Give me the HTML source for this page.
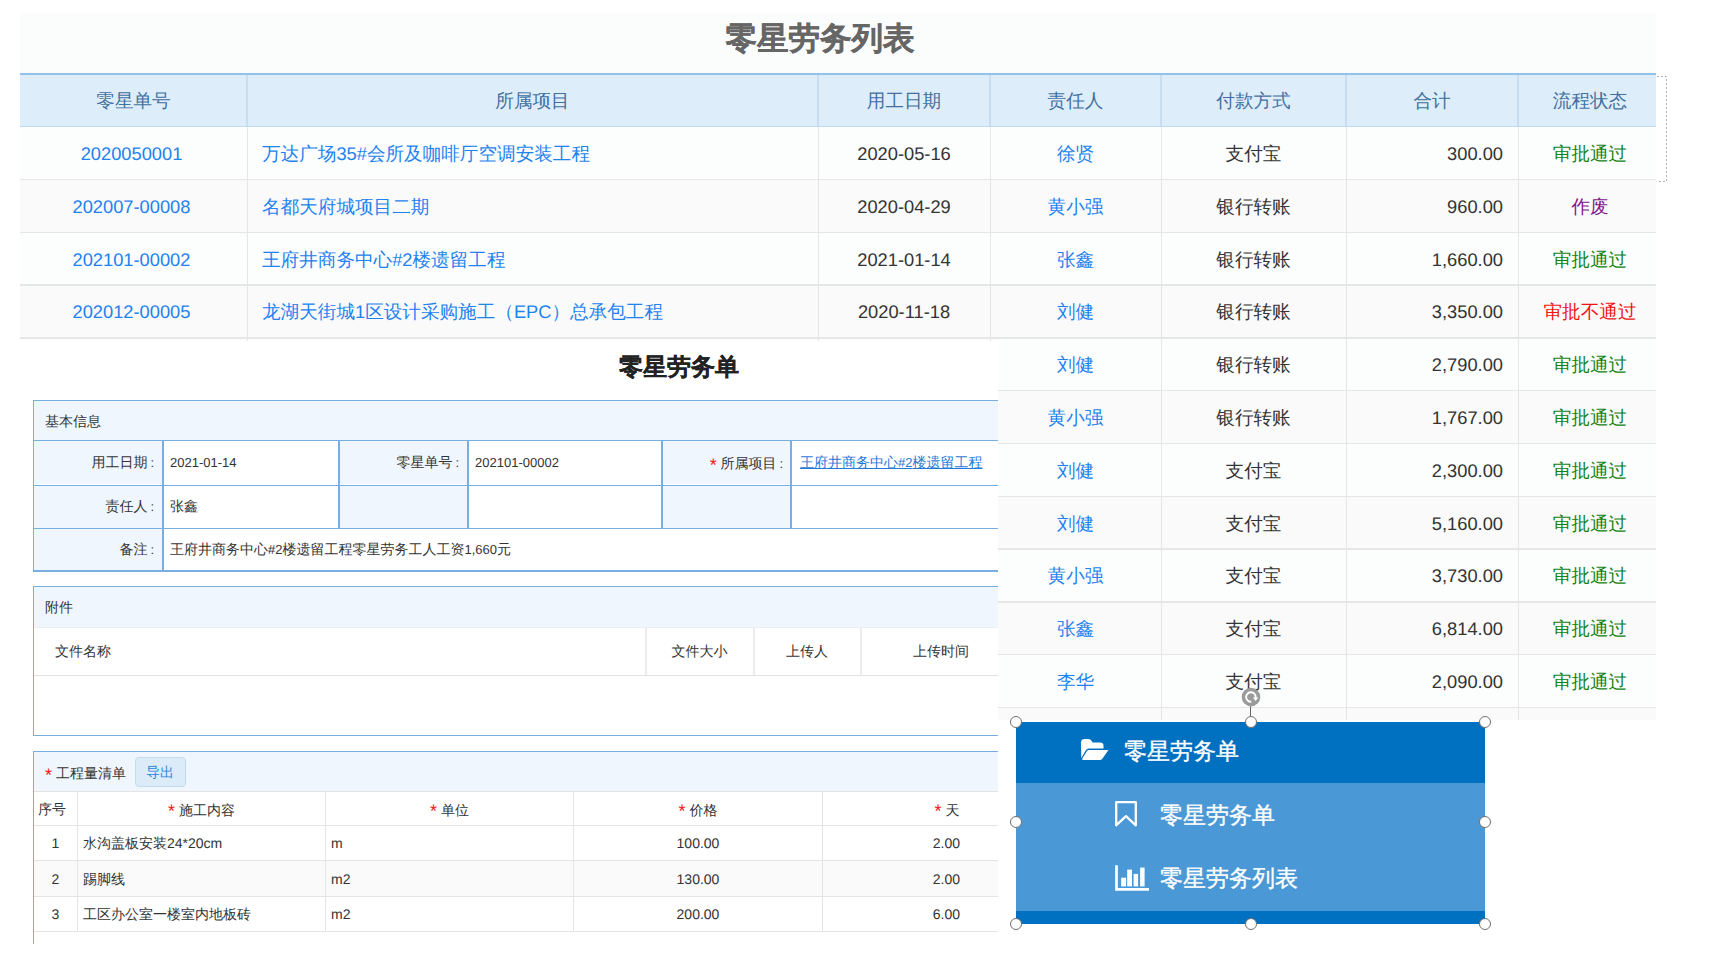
<!DOCTYPE html>
<html><head><meta charset="utf-8"><style>
*{box-sizing:border-box;margin:0;padding:0}
html,body{width:1714px;height:972px;overflow:hidden;background:#fff}
body{position:relative;font-family:"Liberation Sans",sans-serif;color:#333;text-rendering:geometricPrecision}
.abs{position:absolute}
.t{position:absolute;white-space:nowrap}
</style></head><body>

<div class="abs" style="left:20px;top:14px;width:1636px;height:706px;background:#fbfcfc"></div>
<div class="t" style="left:20px;top:13px;width:1600px;height:56px;line-height:50px;text-align:center;font-size:31.5px;font-weight:bold;color:#666;-webkit-text-stroke:0.3px #666">零星劳务列表</div>
<div class="abs" style="left:20px;top:73px;width:1636px;height:54px;background:#deedfa;border-top:2px solid #92c2ea;border-bottom:1px solid #b9d5ee"></div>
<div class="t" style="left:20px;top:75px;width:227px;height:51px;line-height:51px;text-align:center;font-size:18px;color:#41709f"><span style="font-size:18.6px">零星单号</span></div>
<div class="t" style="left:247px;top:75px;width:571px;height:51px;line-height:51px;text-align:center;font-size:18px;color:#41709f"><span style="font-size:18.6px">所属项目</span></div>
<div class="t" style="left:818px;top:75px;width:172px;height:51px;line-height:51px;text-align:center;font-size:18px;color:#41709f"><span style="font-size:18.6px">用工日期</span></div>
<div class="t" style="left:990px;top:75px;width:171px;height:51px;line-height:51px;text-align:center;font-size:18px;color:#41709f"><span style="font-size:18.6px">责任人</span></div>
<div class="t" style="left:1161px;top:75px;width:185px;height:51px;line-height:51px;text-align:center;font-size:18px;color:#41709f"><span style="font-size:18.6px">付款方式</span></div>
<div class="t" style="left:1346px;top:75px;width:172px;height:51px;line-height:51px;text-align:center;font-size:18px;color:#41709f"><span style="font-size:18.6px">合计</span></div>
<div class="t" style="left:1521px;top:75px;width:138px;height:51px;line-height:51px;text-align:center;font-size:18px;color:#41709f"><span style="font-size:18.6px">流程状态</span></div>
<div class="abs" style="left:246px;top:75px;width:2px;height:51px;background:#c8ddef"></div>
<div class="abs" style="left:817px;top:75px;width:2px;height:51px;background:#c8ddef"></div>
<div class="abs" style="left:989px;top:75px;width:2px;height:51px;background:#c8ddef"></div>
<div class="abs" style="left:1160px;top:75px;width:2px;height:51px;background:#c8ddef"></div>
<div class="abs" style="left:1345px;top:75px;width:2px;height:51px;background:#c8ddef"></div>
<div class="abs" style="left:1517px;top:75px;width:2px;height:51px;background:#c8ddef"></div>
<div class="abs" style="left:20px;top:126.4px;width:1636px;height:52.8px;background:#fcfdfd"></div>
<div class="abs" style="left:20px;top:179.2px;width:1636px;height:52.8px;background:#fafafa"></div>
<div class="abs" style="left:20px;top:232.0px;width:1636px;height:52.8px;background:#fcfdfd"></div>
<div class="abs" style="left:20px;top:284.8px;width:1636px;height:52.8px;background:#fafafa"></div>
<div class="abs" style="left:20px;top:337.6px;width:1636px;height:52.8px;background:#fcfdfd"></div>
<div class="abs" style="left:20px;top:390.4px;width:1636px;height:52.8px;background:#fafafa"></div>
<div class="abs" style="left:20px;top:443.2px;width:1636px;height:52.8px;background:#fcfdfd"></div>
<div class="abs" style="left:20px;top:496.0px;width:1636px;height:52.8px;background:#fafafa"></div>
<div class="abs" style="left:20px;top:548.8px;width:1636px;height:52.8px;background:#fcfdfd"></div>
<div class="abs" style="left:20px;top:601.6px;width:1636px;height:52.8px;background:#fafafa"></div>
<div class="abs" style="left:20px;top:654.4px;width:1636px;height:52.8px;background:#fcfdfd"></div>
<div class="abs" style="left:20px;top:707.2px;width:1636px;height:52.8px;background:#fafafa"></div>
<div class="abs" style="left:20px;top:178.7px;width:1636px;height:1.5px;background:#e6e6e6"></div>
<div class="abs" style="left:20px;top:231.5px;width:1636px;height:1.5px;background:#e6e6e6"></div>
<div class="abs" style="left:20px;top:284.3px;width:1636px;height:1.5px;background:#e6e6e6"></div>
<div class="abs" style="left:20px;top:337.1px;width:1636px;height:1.5px;background:#e6e6e6"></div>
<div class="abs" style="left:20px;top:389.9px;width:1636px;height:1.5px;background:#e6e6e6"></div>
<div class="abs" style="left:20px;top:442.7px;width:1636px;height:1.5px;background:#e6e6e6"></div>
<div class="abs" style="left:20px;top:495.5px;width:1636px;height:1.5px;background:#e6e6e6"></div>
<div class="abs" style="left:20px;top:548.3px;width:1636px;height:1.5px;background:#e6e6e6"></div>
<div class="abs" style="left:20px;top:601.1px;width:1636px;height:1.5px;background:#e6e6e6"></div>
<div class="abs" style="left:20px;top:653.9px;width:1636px;height:1.5px;background:#e6e6e6"></div>
<div class="abs" style="left:20px;top:706.7px;width:1636px;height:1.5px;background:#e6e6e6"></div>
<div class="abs" style="left:20px;top:759.5px;width:1636px;height:1.5px;background:#e6e6e6"></div>
<div class="abs" style="left:246.5px;top:126.4px;width:1.5px;height:593.6px;background:#e6e6e6"></div>
<div class="abs" style="left:817.5px;top:126.4px;width:1.5px;height:593.6px;background:#e6e6e6"></div>
<div class="abs" style="left:989.5px;top:126.4px;width:1.5px;height:593.6px;background:#e6e6e6"></div>
<div class="abs" style="left:1160.5px;top:126.4px;width:1.5px;height:593.6px;background:#e6e6e6"></div>
<div class="abs" style="left:1345.5px;top:126.4px;width:1.5px;height:593.6px;background:#e6e6e6"></div>
<div class="abs" style="left:1517.5px;top:126.4px;width:1.5px;height:593.6px;background:#e6e6e6"></div>
<div class="t" style="left:18px;width:227px;top:127.9px;height:52.8px;line-height:52.8px;font-size:18.3px;text-align:center;color:#1e82f0">2020050001</div>
<div class="t" style="left:262px;top:127.9px;height:52.8px;line-height:52.8px;font-size:18.3px;color:#1e82f0"><span style="font-size:18.6px">万达广场</span>35#<span style="font-size:18.6px">会所及咖啡厅空调安装工程</span></div>
<div class="t" style="left:818px;width:172px;top:127.9px;height:52.8px;line-height:52.8px;font-size:18.3px;text-align:center;color:#333">2020-05-16</div>
<div class="t" style="left:990px;width:171px;top:127.9px;height:52.8px;line-height:52.8px;font-size:18.3px;text-align:center;color:#1e82f0"><span style="font-size:18.6px">徐贤</span></div>
<div class="t" style="left:1161px;width:185px;top:127.9px;height:52.8px;line-height:52.8px;font-size:18.3px;text-align:center;color:#333"><span style="font-size:18.6px">支付宝</span></div>
<div class="t" style="left:1346px;width:157px;top:127.9px;height:52.8px;line-height:52.8px;font-size:18.3px;text-align:right;color:#333">300.00</div>
<div class="t" style="left:1521px;width:138px;top:127.9px;height:52.8px;line-height:52.8px;font-size:18.3px;text-align:center;color:#128212"><span style="font-size:18.6px">审批通过</span></div>
<div class="t" style="left:18px;width:227px;top:180.7px;height:52.8px;line-height:52.8px;font-size:18.3px;text-align:center;color:#1e82f0">202007-00008</div>
<div class="t" style="left:262px;top:180.7px;height:52.8px;line-height:52.8px;font-size:18.3px;color:#1e82f0"><span style="font-size:18.6px">名都天府城项目二期</span></div>
<div class="t" style="left:818px;width:172px;top:180.7px;height:52.8px;line-height:52.8px;font-size:18.3px;text-align:center;color:#333">2020-04-29</div>
<div class="t" style="left:990px;width:171px;top:180.7px;height:52.8px;line-height:52.8px;font-size:18.3px;text-align:center;color:#1e82f0"><span style="font-size:18.6px">黄小强</span></div>
<div class="t" style="left:1161px;width:185px;top:180.7px;height:52.8px;line-height:52.8px;font-size:18.3px;text-align:center;color:#333"><span style="font-size:18.6px">银行转账</span></div>
<div class="t" style="left:1346px;width:157px;top:180.7px;height:52.8px;line-height:52.8px;font-size:18.3px;text-align:right;color:#333">960.00</div>
<div class="t" style="left:1521px;width:138px;top:180.7px;height:52.8px;line-height:52.8px;font-size:18.3px;text-align:center;color:#85158a"><span style="font-size:18.6px">作废</span></div>
<div class="t" style="left:18px;width:227px;top:233.5px;height:52.8px;line-height:52.8px;font-size:18.3px;text-align:center;color:#1e82f0">202101-00002</div>
<div class="t" style="left:262px;top:233.5px;height:52.8px;line-height:52.8px;font-size:18.3px;color:#1e82f0"><span style="font-size:18.6px">王府井商务中心</span>#2<span style="font-size:18.6px">楼遗留工程</span></div>
<div class="t" style="left:818px;width:172px;top:233.5px;height:52.8px;line-height:52.8px;font-size:18.3px;text-align:center;color:#333">2021-01-14</div>
<div class="t" style="left:990px;width:171px;top:233.5px;height:52.8px;line-height:52.8px;font-size:18.3px;text-align:center;color:#1e82f0"><span style="font-size:18.6px">张鑫</span></div>
<div class="t" style="left:1161px;width:185px;top:233.5px;height:52.8px;line-height:52.8px;font-size:18.3px;text-align:center;color:#333"><span style="font-size:18.6px">银行转账</span></div>
<div class="t" style="left:1346px;width:157px;top:233.5px;height:52.8px;line-height:52.8px;font-size:18.3px;text-align:right;color:#333">1,660.00</div>
<div class="t" style="left:1521px;width:138px;top:233.5px;height:52.8px;line-height:52.8px;font-size:18.3px;text-align:center;color:#128212"><span style="font-size:18.6px">审批通过</span></div>
<div class="t" style="left:18px;width:227px;top:286.3px;height:52.8px;line-height:52.8px;font-size:18.3px;text-align:center;color:#1e82f0">202012-00005</div>
<div class="t" style="left:262px;top:286.3px;height:52.8px;line-height:52.8px;font-size:18.3px;color:#1e82f0"><span style="font-size:18.6px">龙湖天街城</span>1<span style="font-size:18.6px">区设计采购施工（</span>EPC<span style="font-size:18.6px">）总承包工程</span></div>
<div class="t" style="left:818px;width:172px;top:286.3px;height:52.8px;line-height:52.8px;font-size:18.3px;text-align:center;color:#333">2020-11-18</div>
<div class="t" style="left:990px;width:171px;top:286.3px;height:52.8px;line-height:52.8px;font-size:18.3px;text-align:center;color:#1e82f0"><span style="font-size:18.6px">刘健</span></div>
<div class="t" style="left:1161px;width:185px;top:286.3px;height:52.8px;line-height:52.8px;font-size:18.3px;text-align:center;color:#333"><span style="font-size:18.6px">银行转账</span></div>
<div class="t" style="left:1346px;width:157px;top:286.3px;height:52.8px;line-height:52.8px;font-size:18.3px;text-align:right;color:#333">3,350.00</div>
<div class="t" style="left:1521px;width:138px;top:286.3px;height:52.8px;line-height:52.8px;font-size:18.3px;text-align:center;color:#f21212"><span style="font-size:18.6px">审批不通过</span></div>
<div class="t" style="left:990px;width:171px;top:339.1px;height:52.8px;line-height:52.8px;font-size:18.3px;text-align:center;color:#1e82f0"><span style="font-size:18.6px">刘健</span></div>
<div class="t" style="left:1161px;width:185px;top:339.1px;height:52.8px;line-height:52.8px;font-size:18.3px;text-align:center;color:#333"><span style="font-size:18.6px">银行转账</span></div>
<div class="t" style="left:1346px;width:157px;top:339.1px;height:52.8px;line-height:52.8px;font-size:18.3px;text-align:right;color:#333">2,790.00</div>
<div class="t" style="left:1521px;width:138px;top:339.1px;height:52.8px;line-height:52.8px;font-size:18.3px;text-align:center;color:#128212"><span style="font-size:18.6px">审批通过</span></div>
<div class="t" style="left:990px;width:171px;top:391.9px;height:52.8px;line-height:52.8px;font-size:18.3px;text-align:center;color:#1e82f0"><span style="font-size:18.6px">黄小强</span></div>
<div class="t" style="left:1161px;width:185px;top:391.9px;height:52.8px;line-height:52.8px;font-size:18.3px;text-align:center;color:#333"><span style="font-size:18.6px">银行转账</span></div>
<div class="t" style="left:1346px;width:157px;top:391.9px;height:52.8px;line-height:52.8px;font-size:18.3px;text-align:right;color:#333">1,767.00</div>
<div class="t" style="left:1521px;width:138px;top:391.9px;height:52.8px;line-height:52.8px;font-size:18.3px;text-align:center;color:#128212"><span style="font-size:18.6px">审批通过</span></div>
<div class="t" style="left:990px;width:171px;top:444.7px;height:52.8px;line-height:52.8px;font-size:18.3px;text-align:center;color:#1e82f0"><span style="font-size:18.6px">刘健</span></div>
<div class="t" style="left:1161px;width:185px;top:444.7px;height:52.8px;line-height:52.8px;font-size:18.3px;text-align:center;color:#333"><span style="font-size:18.6px">支付宝</span></div>
<div class="t" style="left:1346px;width:157px;top:444.7px;height:52.8px;line-height:52.8px;font-size:18.3px;text-align:right;color:#333">2,300.00</div>
<div class="t" style="left:1521px;width:138px;top:444.7px;height:52.8px;line-height:52.8px;font-size:18.3px;text-align:center;color:#128212"><span style="font-size:18.6px">审批通过</span></div>
<div class="t" style="left:990px;width:171px;top:497.5px;height:52.8px;line-height:52.8px;font-size:18.3px;text-align:center;color:#1e82f0"><span style="font-size:18.6px">刘健</span></div>
<div class="t" style="left:1161px;width:185px;top:497.5px;height:52.8px;line-height:52.8px;font-size:18.3px;text-align:center;color:#333"><span style="font-size:18.6px">支付宝</span></div>
<div class="t" style="left:1346px;width:157px;top:497.5px;height:52.8px;line-height:52.8px;font-size:18.3px;text-align:right;color:#333">5,160.00</div>
<div class="t" style="left:1521px;width:138px;top:497.5px;height:52.8px;line-height:52.8px;font-size:18.3px;text-align:center;color:#128212"><span style="font-size:18.6px">审批通过</span></div>
<div class="t" style="left:990px;width:171px;top:550.3px;height:52.8px;line-height:52.8px;font-size:18.3px;text-align:center;color:#1e82f0"><span style="font-size:18.6px">黄小强</span></div>
<div class="t" style="left:1161px;width:185px;top:550.3px;height:52.8px;line-height:52.8px;font-size:18.3px;text-align:center;color:#333"><span style="font-size:18.6px">支付宝</span></div>
<div class="t" style="left:1346px;width:157px;top:550.3px;height:52.8px;line-height:52.8px;font-size:18.3px;text-align:right;color:#333">3,730.00</div>
<div class="t" style="left:1521px;width:138px;top:550.3px;height:52.8px;line-height:52.8px;font-size:18.3px;text-align:center;color:#128212"><span style="font-size:18.6px">审批通过</span></div>
<div class="t" style="left:990px;width:171px;top:603.1px;height:52.8px;line-height:52.8px;font-size:18.3px;text-align:center;color:#1e82f0"><span style="font-size:18.6px">张鑫</span></div>
<div class="t" style="left:1161px;width:185px;top:603.1px;height:52.8px;line-height:52.8px;font-size:18.3px;text-align:center;color:#333"><span style="font-size:18.6px">支付宝</span></div>
<div class="t" style="left:1346px;width:157px;top:603.1px;height:52.8px;line-height:52.8px;font-size:18.3px;text-align:right;color:#333">6,814.00</div>
<div class="t" style="left:1521px;width:138px;top:603.1px;height:52.8px;line-height:52.8px;font-size:18.3px;text-align:center;color:#128212"><span style="font-size:18.6px">审批通过</span></div>
<div class="t" style="left:990px;width:171px;top:655.9px;height:52.8px;line-height:52.8px;font-size:18.3px;text-align:center;color:#1e82f0"><span style="font-size:18.6px">李华</span></div>
<div class="t" style="left:1161px;width:185px;top:655.9px;height:52.8px;line-height:52.8px;font-size:18.3px;text-align:center;color:#333"><span style="font-size:18.6px">支付宝</span></div>
<div class="t" style="left:1346px;width:157px;top:655.9px;height:52.8px;line-height:52.8px;font-size:18.3px;text-align:right;color:#333">2,090.00</div>
<div class="t" style="left:1521px;width:138px;top:655.9px;height:52.8px;line-height:52.8px;font-size:18.3px;text-align:center;color:#128212"><span style="font-size:18.6px">审批通过</span></div>
<div class="abs" style="left:20px;top:125.5px;width:1636px;height:1.5px;background:#c3daee"></div>
<div class="abs" style="left:998px;top:720px;width:716px;height:252px;background:#fff"></div>
<svg class="abs" style="left:1656px;top:75px" width="14" height="110" viewBox="0 0 14 110"><path d="M1 1.5 H10.5 V106.5 H1" fill="none" stroke="#b0b0b0" stroke-width="1" stroke-dasharray="2 2"/></svg>
<div class="abs" style="left:0;top:341px;width:998px;height:631px;background:#fff;overflow:hidden">
<div class="t" style="left:0px;top:10px;width:1358px;height:34px;line-height:34px;text-align:center;font-size:24px;font-weight:bold;color:#222;-webkit-text-stroke:0.2px #222">零星劳务单</div>
<div class="abs" style="left:33px;top:59px;width:1000px;height:171px;border:1px solid #78aee0;background:#fff"></div>
<div class="abs" style="left:34px;top:60px;width:1000px;height:38.5px;background:#eff6fd"></div>
<div class="t" style="left:45px;top:61px;width:200px;height:38px;line-height:38px;font-size:14px;color:#333">基本信息</div>
<div class="abs" style="left:33px;top:98.5px;width:1000px;height:1.5px;background:#78aee0"></div>
<div class="abs" style="left:33px;top:143.5px;width:1000px;height:1.5px;background:#78aee0"></div>
<div class="abs" style="left:33px;top:186.5px;width:1000px;height:1.5px;background:#78aee0"></div>
<div class="abs" style="left:33px;top:229px;width:1000px;height:1.5px;background:#78aee0"></div>
<div class="abs" style="left:34px;top:100px;width:128px;height:43px;background:#eff6fd"></div>
<div class="abs" style="left:34px;top:145px;width:128px;height:41.5px;background:#eff6fd"></div>
<div class="abs" style="left:339px;top:100px;width:128px;height:43px;background:#eff6fd"></div>
<div class="abs" style="left:339px;top:145px;width:128px;height:41.5px;background:#eff6fd"></div>
<div class="abs" style="left:662px;top:100px;width:128px;height:43px;background:#eff6fd"></div>
<div class="abs" style="left:662px;top:145px;width:128px;height:41.5px;background:#eff6fd"></div>
<div class="abs" style="left:34px;top:188px;width:128px;height:41px;background:#eff6fd"></div>
<div class="abs" style="left:162px;top:98.5px;width:1.5px;height:45px;background:#78aee0"></div>
<div class="abs" style="left:162px;top:143.5px;width:1.5px;height:43px;background:#78aee0"></div>
<div class="abs" style="left:338px;top:98.5px;width:1.5px;height:45px;background:#78aee0"></div>
<div class="abs" style="left:338px;top:143.5px;width:1.5px;height:43px;background:#78aee0"></div>
<div class="abs" style="left:467px;top:98.5px;width:1.5px;height:45px;background:#78aee0"></div>
<div class="abs" style="left:467px;top:143.5px;width:1.5px;height:43px;background:#78aee0"></div>
<div class="abs" style="left:661px;top:98.5px;width:1.5px;height:45px;background:#78aee0"></div>
<div class="abs" style="left:661px;top:143.5px;width:1.5px;height:43px;background:#78aee0"></div>
<div class="abs" style="left:790px;top:98.5px;width:1.5px;height:45px;background:#78aee0"></div>
<div class="abs" style="left:790px;top:143.5px;width:1.5px;height:43px;background:#78aee0"></div>
<div class="abs" style="left:162px;top:186.5px;width:1.5px;height:43px;background:#78aee0"></div>
<div class="t" style="left:34px;top:100px;width:120px;height:43px;line-height:43px;text-align:right;font-size:13px;color:#333"><span style="font-size:14px">用工日期</span><span style="margin-left:3px">:</span></div>
<div class="t" style="left:170px;top:100px;width:160px;height:43px;line-height:43px;font-size:13px;color:#333">2021-01-14</div>
<div class="t" style="left:339px;top:100px;width:120px;height:43px;line-height:43px;text-align:right;font-size:13px;color:#333"><span style="font-size:14px">零星单号</span><span style="margin-left:3px">:</span></div>
<div class="t" style="left:475px;top:100px;width:180px;height:43px;line-height:43px;font-size:13px;color:#333">202101-00002</div>
<div class="t" style="left:662px;top:100px;width:121px;height:43px;line-height:43px;text-align:right;font-size:13px;color:#333"><span style="color:#f51818;font-size:18px;position:relative;top:2.5px">*</span>&nbsp;<span style="font-size:14px">所属项目</span><span style="margin-left:3px">:</span></div>
<div class="t" style="left:800px;top:100px;width:200px;height:43px;line-height:43px;font-size:13px;color:#333"><span style="text-decoration:underline;color:#1f7ad8"><span style="font-size:14px">王府井商务中心</span>#2<span style="font-size:14px">楼遗留工程</span></span></div>
<div class="t" style="left:34px;top:145px;width:120px;height:41px;line-height:41px;text-align:right;font-size:13px;color:#333"><span style="font-size:14px">责任人</span><span style="margin-left:3px">:</span></div>
<div class="t" style="left:170px;top:145px;width:160px;height:41px;line-height:41px;font-size:13px;color:#333"><span style="font-size:14px">张鑫</span></div>
<div class="t" style="left:34px;top:188px;width:120px;height:41px;line-height:41px;text-align:right;font-size:13px;color:#333"><span style="font-size:14px">备注</span><span style="margin-left:3px">:</span></div>
<div class="t" style="left:170px;top:188px;width:600px;height:41px;line-height:41px;font-size:13px;color:#333"><span style="font-size:14px">王府井商务中心</span>#2<span style="font-size:14px">楼遗留工程零星劳务工人工资</span>1,660<span style="font-size:14px">元</span></div>
<div class="abs" style="left:33px;top:245px;width:1000px;height:150px;border:1px solid #78aee0;background:#fff"></div>
<div class="abs" style="left:34px;top:246px;width:1000px;height:40px;background:#eff6fd"></div>
<div class="t" style="left:45px;top:246px;width:200px;height:40px;line-height:40px;font-size:14px;color:#333">附件</div>
<div class="abs" style="left:34px;top:285.5px;width:1000px;height:1px;background:#e8eef5"></div>
<div class="abs" style="left:34px;top:334px;width:1000px;height:1px;background:#e2e2e2"></div>
<div class="abs" style="left:645px;top:286px;width:1.5px;height:48px;background:#ececec"></div>
<div class="abs" style="left:753px;top:286px;width:1.5px;height:48px;background:#ececec"></div>
<div class="abs" style="left:860px;top:286px;width:1.5px;height:48px;background:#ececec"></div>
<div class="t" style="left:55px;top:286px;width:200px;height:48px;line-height:48px;font-size:14px;color:#333">文件名称</div>
<div class="t" style="left:646px;top:286px;width:107px;height:48px;line-height:48px;font-size:14px;color:#333;text-align:center">文件大小</div>
<div class="t" style="left:754px;top:286px;width:106px;height:48px;line-height:48px;font-size:14px;color:#333;text-align:center">上传人</div>
<div class="t" style="left:861px;top:286px;width:160px;height:48px;line-height:48px;font-size:14px;color:#333;text-align:center">上传时间</div>
<div class="abs" style="left:33px;top:410px;width:1000px;height:260px;border:1px solid #78aee0;background:#fff"></div>
<div class="abs" style="left:34px;top:411px;width:1000px;height:39.5px;background:#eff6fd"></div>
<div class="t" style="left:45px;top:411px;width:200px;height:40px;line-height:40px;font-size:14px;color:#333"><span style="color:#f51818;font-size:18px;position:relative;top:2.5px">*</span> 工程量清单</div>
<div class="abs" style="left:134.5px;top:415.5px;width:51px;height:30px;background:#dcebf8;border:1px solid #c3dbf0;border-radius:4px"></div>
<div class="t" style="left:134.5px;top:415.5px;width:51px;height:30px;line-height:30px;font-size:14px;color:#2b86d9;text-align:center">导出</div>
<div class="abs" style="left:34px;top:450px;width:1000px;height:1px;background:#e4e4e4"></div>
<div class="abs" style="left:34px;top:484px;width:1000px;height:1px;background:#e4e4e4"></div>
<div class="abs" style="left:34px;top:519.5px;width:1000px;height:35.5px;background:#fafafa"></div>
<div class="abs" style="left:34px;top:519px;width:1000px;height:1px;background:#e4e4e4"></div>
<div class="abs" style="left:34px;top:555px;width:1000px;height:1px;background:#e4e4e4"></div>
<div class="abs" style="left:34px;top:590px;width:1000px;height:1px;background:#e4e4e4"></div>
<div class="abs" style="left:77px;top:451px;width:1px;height:139px;background:#e4e4e4"></div>
<div class="abs" style="left:325px;top:451px;width:1px;height:139px;background:#e4e4e4"></div>
<div class="abs" style="left:573px;top:451px;width:1px;height:139px;background:#e4e4e4"></div>
<div class="abs" style="left:822px;top:451px;width:1px;height:139px;background:#e4e4e4"></div>
<div class="abs" style="left:0px;top:603px;width:998px;height:40px;background:#fff"></div>
<div class="abs" style="left:33px;top:590.5px;width:1px;height:12.5px;background:#78aee0"></div>
<div class="t" style="left:38px;top:451.5px;width:43px;height:33px;line-height:33px;font-size:14px;color:#333">序号</div>
<div class="t" style="left:78px;top:451.5px;width:247px;height:33px;line-height:33px;font-size:14px;color:#333;text-align:center"><span style="color:#f51818;font-size:18px;position:relative;top:2.5px">*</span> 施工内容</div>
<div class="t" style="left:326px;top:451.5px;width:247px;height:33px;line-height:33px;font-size:14px;color:#333;text-align:center"><span style="color:#f51818;font-size:18px;position:relative;top:2.5px">*</span> 单位</div>
<div class="t" style="left:574px;top:451.5px;width:248px;height:33px;line-height:33px;font-size:14px;color:#333;text-align:center"><span style="color:#f51818;font-size:18px;position:relative;top:2.5px">*</span> 价格</div>
<div class="t" style="left:823px;top:451.5px;width:248px;height:33px;line-height:33px;font-size:14px;color:#333;text-align:center"><span style="color:#f51818;font-size:18px;position:relative;top:2.5px">*</span> 天</div>
<div class="t" style="left:34px;top:485px;width:43px;height:34px;line-height:34px;font-size:14px;color:#333;text-align:center">1</div>
<div class="t" style="left:83px;top:485px;width:240px;height:34px;line-height:34px;font-size:14px;color:#333">水沟盖板安装24*20cm</div>
<div class="t" style="left:331px;top:485px;width:240px;height:34px;line-height:34px;font-size:14px;color:#333">m</div>
<div class="t" style="left:574px;top:485px;width:248px;height:34px;line-height:34px;font-size:14px;color:#333;text-align:center">100.00</div>
<div class="t" style="left:823px;top:485px;width:137px;height:34px;line-height:34px;font-size:14px;color:#333;text-align:right">2.00</div>
<div class="t" style="left:34px;top:520.5px;width:43px;height:34px;line-height:34px;font-size:14px;color:#333;text-align:center">2</div>
<div class="t" style="left:83px;top:520.5px;width:240px;height:34px;line-height:34px;font-size:14px;color:#333">踢脚线</div>
<div class="t" style="left:331px;top:520.5px;width:240px;height:34px;line-height:34px;font-size:14px;color:#333">m2</div>
<div class="t" style="left:574px;top:520.5px;width:248px;height:34px;line-height:34px;font-size:14px;color:#333;text-align:center">130.00</div>
<div class="t" style="left:823px;top:520.5px;width:137px;height:34px;line-height:34px;font-size:14px;color:#333;text-align:right">2.00</div>
<div class="t" style="left:34px;top:556px;width:43px;height:34px;line-height:34px;font-size:14px;color:#333;text-align:center">3</div>
<div class="t" style="left:83px;top:556px;width:240px;height:34px;line-height:34px;font-size:14px;color:#333">工区办公室一楼室内地板砖</div>
<div class="t" style="left:331px;top:556px;width:240px;height:34px;line-height:34px;font-size:14px;color:#333">m2</div>
<div class="t" style="left:574px;top:556px;width:248px;height:34px;line-height:34px;font-size:14px;color:#333;text-align:center">200.00</div>
<div class="t" style="left:823px;top:556px;width:137px;height:34px;line-height:34px;font-size:14px;color:#333;text-align:right">6.00</div>
</div>
<div class="abs" style="left:1016px;top:721.5px;width:469px;height:202px;background:#0070c1"></div>
<div class="abs" style="left:1016px;top:783px;width:469px;height:127.5px;background:#4a98d5"></div>
<svg class="abs" style="left:1081px;top:739px" width="28" height="22" viewBox="0 0 28 22">
<path d="M0 3.5 Q0 0 3.5 0 H7.5 Q10 0 11 2.5 L11.5 3.5 H19 Q22.5 3.5 22.5 6.5 V9.5 H7.5 Q6 9.5 5 11 L0.3 19 Z" fill="#fff"/>
<path d="M7 11 H27.5 L21.5 19.5 Q20.5 21 18.5 21 H2.5 Q0.5 21 1.3 19.5 L6 12 Q6.5 11 7 11 Z" fill="#fff"/>
</svg>
<div class="t" style="left:1124px;top:731px;height:40px;line-height:40px;font-size:23px;color:#fff;-webkit-text-stroke:0.35px #fff">零星劳务单</div>
<svg class="abs" style="left:1115px;top:801px" width="23" height="27" viewBox="0 0 23 27">
<path d="M1.2 1.2 H20.8 V24.3 L11 15.2 L1.2 24.3 Z" fill="none" stroke="#fff" stroke-width="2.3" stroke-linejoin="round"/>
</svg>
<div class="t" style="left:1160px;top:795px;height:40px;line-height:40px;font-size:23px;color:#fff;-webkit-text-stroke:0.35px #fff">零星劳务单</div>
<svg class="abs" style="left:1115px;top:865px" width="36" height="27" viewBox="0 0 36 27">
<path d="M1.5 0.3 V24.3 H34" fill="none" stroke="#fff" stroke-width="2.7"/>
<rect x="6.2" y="12.7" width="4.9" height="8.7" fill="#fff"/>
<rect x="12.2" y="4.6" width="4.8" height="16.8" fill="#fff"/>
<rect x="18.6" y="8.9" width="4.5" height="12.5" fill="#fff"/>
<rect x="25.1" y="2.6" width="4.5" height="18.8" fill="#fff"/>
</svg>
<div class="t" style="left:1160px;top:858px;height:40px;line-height:40px;font-size:23px;color:#fff;-webkit-text-stroke:0.35px #fff">零星劳务列表</div>
<div class="abs" style="left:1250px;top:700px;width:1.2px;height:22px;background:#666"></div>
<svg class="abs" style="left:1240.5px;top:686.6px" width="20" height="20" viewBox="0 0 20 20">
<circle cx="10" cy="10" r="9.3" fill="#9b9b9b"/>
<path d="M10.3 14.8 A4.8 4.8 0 1 1 14.6 11" fill="none" stroke="#fff" stroke-width="1.9"/>
<path d="M11.8 10.6 L17.4 10.4 L14.6 13.9 Z" fill="#fff"/>
</svg>
<div class="abs" style="left:1009.5px;top:715.5px;width:12px;height:12px;border-radius:50%;background:#fff;border:1px solid #707070"></div>
<div class="abs" style="left:1244.5px;top:715.5px;width:12px;height:12px;border-radius:50%;background:#fff;border:1px solid #707070"></div>
<div class="abs" style="left:1478.5px;top:715.5px;width:12px;height:12px;border-radius:50%;background:#fff;border:1px solid #707070"></div>
<div class="abs" style="left:1009.5px;top:816px;width:12px;height:12px;border-radius:50%;background:#fff;border:1px solid #707070"></div>
<div class="abs" style="left:1478.5px;top:816px;width:12px;height:12px;border-radius:50%;background:#fff;border:1px solid #707070"></div>
<div class="abs" style="left:1009.5px;top:917.5px;width:12px;height:12px;border-radius:50%;background:#fff;border:1px solid #707070"></div>
<div class="abs" style="left:1244.5px;top:917.5px;width:12px;height:12px;border-radius:50%;background:#fff;border:1px solid #707070"></div>
<div class="abs" style="left:1478.5px;top:917.5px;width:12px;height:12px;border-radius:50%;background:#fff;border:1px solid #707070"></div>
<!--FORM-->
</body></html>
